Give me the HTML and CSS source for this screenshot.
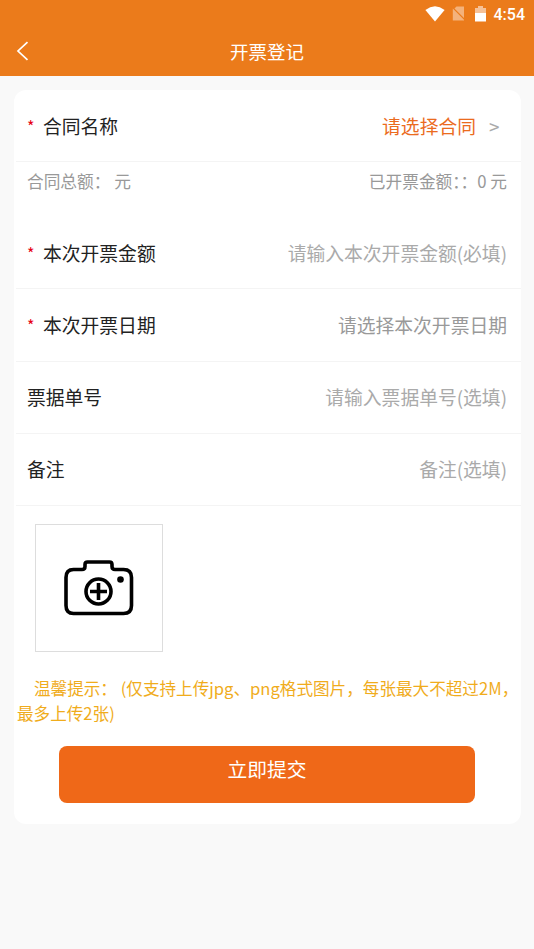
FILE: index.html
```html
<!DOCTYPE html>
<html lang="zh-CN">
<head>
<meta charset="utf-8">
<title>开票登记</title>
<link rel="stylesheet" href="styles.css">
</head>
<body>
<header class="header">
  <div class="status">
    <svg class="wifi" width="20" height="16" viewBox="0 0 20 16"><path d="M0.4 4Q10-3.4 19.6 4L10 15.6Z" fill="#fff"/></svg>
    <svg class="sim" width="13" height="15" viewBox="0 0 13 15"><path d="M4.5 0.5H12V12L2.5 2.5ZM0.8 2.4L12 13.8V14.5H0.8Z" fill="#f4b27b"/></svg>
    <svg class="battery" width="11" height="16" viewBox="0 0 11 16"><path d="M3 0H8V2H11V7H0V2H3Z" fill="#f6c197"/><path d="M0 7H11V15.5H0Z" fill="#fff"/></svg>
    <span class="clock">4:54</span>
  </div>
  <div class="nav">
    <svg class="back" width="14" height="20" viewBox="0 0 14 20"><path d="M11.5 1.2L2 10L11.5 18.8" fill="none" stroke="#fff" stroke-width="1.7"/></svg>
    <h1 class="title">开票登记</h1>
  </div>
</header>
<main class="card">
  <div class="row first">
    <span class="star">*</span><span class="label">合同名称</span>
    <span class="value pick">请选择合同</span><span class="arrow">&gt;</span>
  </div>
  <div class="summary"><span>合同总额： 元</span><span>已开票金额：：0 元</span></div>
  <div class="row"><span class="star">*</span><span class="label">本次开票金额</span><span class="value">请输入本次开票金额(必填)</span></div>
  <div class="row"><span class="star">*</span><span class="label">本次开票日期</span><span class="value date">请选择本次开票日期</span></div>
  <div class="row"><span class="label">票据单号</span><span class="value">请输入票据单号(选填)</span></div>
  <div class="row"><span class="label">备注</span><span class="value">备注(选填)</span></div>
  <div class="upload">
    <svg width="70" height="56" viewBox="0 0 70 56" fill="none" stroke="#000" stroke-width="3.6">
      <path d="M9.5 9.5H18Q21 9.5 21 6.500V4.500Q21 2 23.500 2H45.500Q48 2 48 4.500V6.500Q48 9.500 51 9.500H59.500Q67.500 9.500 67.500 17.500V45.500Q67.500 53.500 59.500 53.500H9.500Q2 53.500 2 45.500V17.500Q2 9.500 9.500 9.500Z"/>
      <circle cx="34.500" cy="31.500" r="12.500"/>
      <path d="M26 31.500H43M34.500 23V40"/>
      <circle cx="56.500" cy="19.500" r="3.300" fill="#000" stroke="none"/>
    </svg>
  </div>
  <p class="tip">温馨提示： (仅支持上传jpg、png格式图片，每张最大不超过2M，最多上传2张)</p>
  <button class="submit">立即提交</button>
</main>
</body>
</html>
```
FILE: styles.css
```css
* {
  box-sizing: border-box;
}

body {
  margin: 0;
  min-height: 949px;
  background: #f9f9f9;
  font-family: "Noto Sans CJK SC", sans-serif;
  font-size: 18.8px;
  color: #222;
}

.header {
  height: 76px;
  background: #eb7b1b;
  color: #fff;
}

.status {
  display: flex;
  align-items: center;
  justify-content: flex-end;
  height: 27px;
  padding-right: 9px;
}

.wifi {
  margin-right: 7px;
}

.sim {
  margin-right: 10px;
}

.battery {
  margin-right: 8px;
}

.clock {
  font: 500 16px/27px Roboto, sans-serif;
  padding-top: 1px;
}

.nav {
  display: flex;
  align-items: center;
  height: 48px;
  padding-left: 16px;
}

.title {
  flex: 1;
  margin: 0 30px 0 0;
  font-size: 18.500px;
  font-weight: 400;
  line-height: 28px;
  text-align: center;
}

.card {
  width: 507px;
  height: 734px;
  margin: 14px 0 0 14px;
  background: #fff;
  border-radius: 12px;
}

.row {
  display: flex;
  align-items: center;
  height: 72.200px;
  margin-left: 2px;
  padding: 0 14px 0 11px;
  border-bottom: 1px solid #f4f4f4;
  line-height: 28px;
  white-space: nowrap;
}

.star {
  width: 16px;
  color: #e60012;
  font-size: 16px;
}

.value {
  margin-left: auto;
  color: #aaa;
}

.date {
  color: #999;
}

.pick {
  color: #eb6b1e;
}

.arrow {
  width: 31px;
  padding-left: 13px;
  color: #aaa;
}

.summary {
  display: flex;
  justify-content: space-between;
  height: 55px;
  padding: 6px 14px 0 13px;
  color: #999;
  font-size: 16.700px;
  line-height: 26px;
}

.upload {
  display: flex;
  align-items: center;
  justify-content: center;
  width: 128px;
  height: 128px;
  margin: 18px 0 0 21px;
  border: 1px solid #ddd;
}

.tip {
  margin: 24px 0 0 3px;
  color: #f0ac1c;
  font-size: 16.600px;
  line-height: 25px;
  text-indent: 17px;
}

.submit {
  display: block;
  width: 416px;
  height: 57px;
  margin: 20px 0 0 45px;
  padding: 0 0 10px;
  border: 0;
  border-radius: 8px;
  background: #ef6818;
  color: #fff;
  font: 19.800px/28px "Noto Sans CJK SC", sans-serif;
}
```
